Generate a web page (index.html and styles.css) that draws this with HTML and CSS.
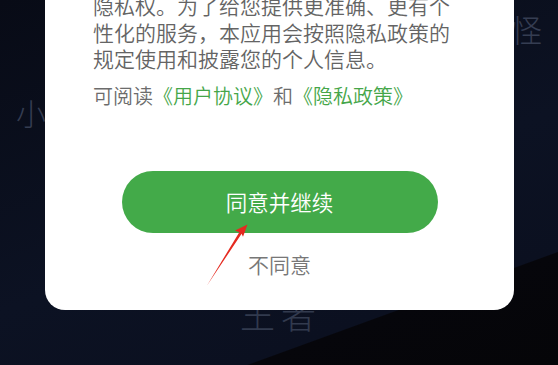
FILE: index.html
```html
<!DOCTYPE html>
<html lang="zh-CN">
<head>
  <meta charset="UTF-8" />
  <title>隐私政策</title>
  <link rel="stylesheet" href="styles.css">
</head>
<body>
  <div class="backdrop">
    <span class="bg-word word-xiao">小</span>
    <span class="bg-word word-guai">怪</span>
    <span class="bg-word word-wang">王者</span>
  </div>

  <div class="dialog">
    <p class="policy-text">隐私权。为了给您提供更准确、更有个性化的服务，本应用会按照隐私政策的规定使用和披露您的个人信息。</p>
    <p class="policy-links">可阅读<a href="#">《用户协议》</a>和<a href="#">《隐私政策》</a></p>
    <button class="btn-agree">同意并继续</button>
    <div class="btn-decline">不同意</div>
  </div>

  <!-- 标注箭头 -->
  <svg class="mark-arrow" width="55" height="70" viewBox="0 0 55 70">
    <polygon points="47.5,4.5 35,10.5 39.3,12.2 7,65.5 41.6,13.8 43,16.8" fill="#e52a20" />
  </svg>
</body>
</html>
```

FILE: styles.css
```css
html, body {
  height: 100%;
}

body {
  margin: 0;
  position: relative;
  overflow: hidden;
  font-family: "Noto Sans CJK SC", "Noto Sans", sans-serif;
  background: linear-gradient(160deg, #080b16 0%, #0c1223 55%, #0b1020 80%, #06060b 80.2%, #050508 100%);
}

.backdrop {
  position: absolute;
  inset: 0;
}

.bg-word {
  position: absolute;
  color: #353d52;
  line-height: 1;
  font-weight: 300;
}

.word-xiao {
  left: 16px;
  top: 97px;
  font-size: 30px;
}

.word-guai {
  left: 511px;
  top: 13px;
  font-size: 31px;
}

.word-wang {
  left: 240px;
  top: 296px;
  font-size: 35px;
  letter-spacing: 6px;
  color: #323a4e;
}

.dialog {
  position: relative;
  width: 373px;
  margin: -38px 0 0 45px;
  padding: 30px 48px 32px;
  background-color: #fff;
  border-radius: 0 0 20px 20px;
}

.policy-text {
  margin: 0;
  font-size: 21px;
  font-weight: 350;
  line-height: 26.5px;
  color: #646464;
}

.policy-links {
  margin: 11px 0 0;
  font-size: 20px;
  font-weight: 350;
  line-height: 26px;
  color: #6c6c6c;
}

.policy-links a {
  color: #45a649;
  text-decoration: none;
}

.btn-agree {
  display: block;
  width: 316px;
  height: 62px;
  margin: 62px auto 0;
  border: none;
  border-radius: 31px;
  background-color: #43aa49;
  color: #fff;
  font-family: inherit;
  font-size: 21.5px;
  font-weight: 350;
  cursor: pointer;
}

.btn-decline {
  margin-top: 17px;
  text-align: center;
  font-size: 21px;
  font-weight: 350;
  line-height: 28px;
  color: #777;
}

.mark-arrow {
  position: absolute;
  left: 200px;
  top: 220px;
}
```
